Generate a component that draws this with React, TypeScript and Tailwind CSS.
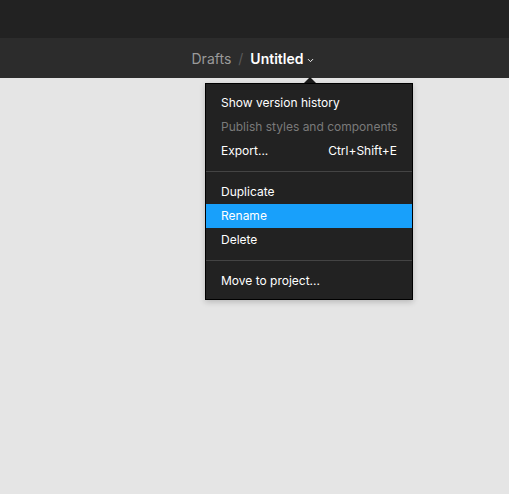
import { ChevronDown } from "lucide-react";

type Item = { label: string; shortcut?: string; disabled?: boolean; active?: boolean };

const groups: Item[][] = [
  [
    { label: "Show version history" },
    { label: "Publish styles and components", disabled: true },
    { label: "Export...", shortcut: "Ctrl+Shift+E" },
  ],
  [{ label: "Duplicate" }, { label: "Rename", active: true }, { label: "Delete" }],
  [{ label: "Move to project..." }],
];

function MenuRow({ item }: { item: Item }) {
  return (
    <div
      className={`flex h-6 items-center justify-between whitespace-nowrap px-[15px] text-[12px] ${
        item.active ? "bg-[#18a0fb] text-white" : item.disabled ? "text-[#7a7a7a]" : "text-white"
      }`}
    >
      <span>{item.label}</span>
      {item.shortcut && <span>{item.shortcut}</span>}
    </div>
  );
}

export default function App() {
  return (
    <div
      className="flex h-[494px] w-[509px] flex-col bg-[#e5e5e5]"
      style={{ fontFamily: "Inter, 'Noto Sans', sans-serif" }}
    >
      <div className="h-[38px] bg-[#222222]" />
      <div className="flex h-10 items-center justify-center bg-[#2c2c2c] pr-[2px] text-[14px]">
        <span className="text-[#9a9a9a]">Drafts</span>
        <span className="mx-[7px] text-[#5a5a5a]">/</span>
        <span className="font-semibold text-white">Untitled</span>
        <ChevronDown size={9} strokeWidth={2.5} className="ml-[3px] mt-[5px] text-white" />
      </div>

      <div className="relative ml-[205px] mt-[5px] w-[208px]">
        {/* little caret pointing at the title */}
        <div className="absolute -top-[6px] left-[99px] h-0 w-0 border-x-[6px] border-b-[6px] border-x-transparent border-b-[#1a1a1a]" />
        <div className="border border-black bg-[#222222] pt-[7px] pb-[6px] shadow-[0_2px_6px_rgba(0,0,0,0.2)]">
          {groups.map((group, gi) => (
            <div key={gi}>
              {gi > 0 && <div className="my-2 h-px bg-[#444444]" />}
              {group.map((item) => (
                <MenuRow key={item.label} item={item} />
              ))}
            </div>
          ))}
        </div>
      </div>
    </div>
  );
}
